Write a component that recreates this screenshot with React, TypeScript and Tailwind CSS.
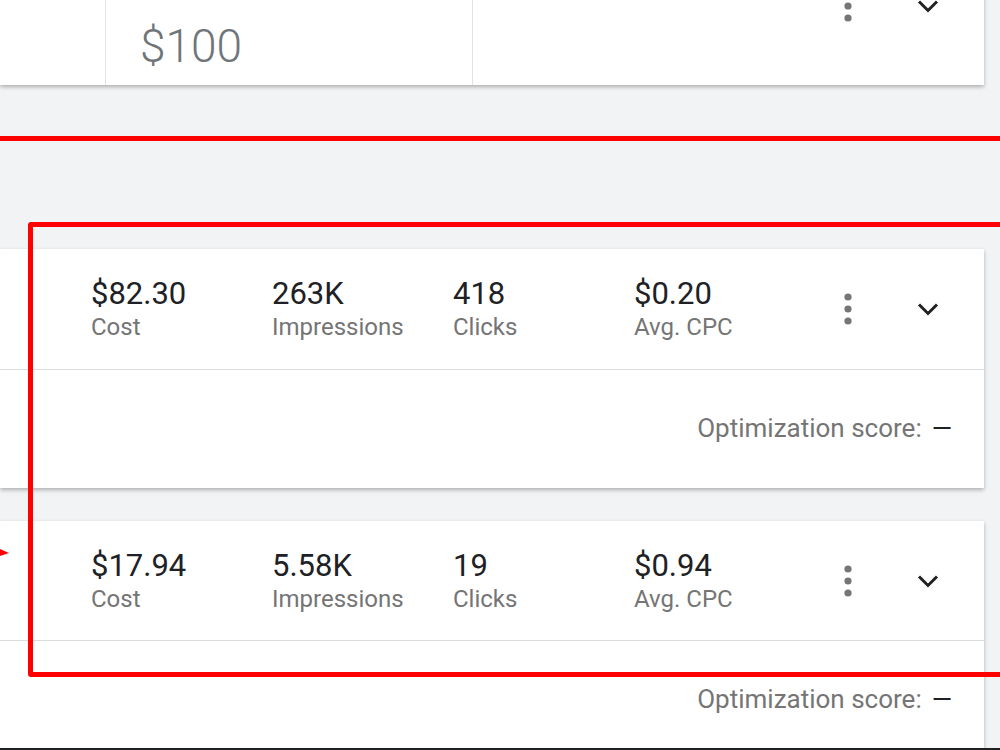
import React from "react";

function Actions() {
  return (
    <div className="flex items-center gap-[65px]">
      <svg width="8" height="32" viewBox="0 0 8 32" className="block">
        <circle cx="4" cy="4" r="3.6" fill="#757575" />
        <circle cx="4" cy="16" r="3.6" fill="#757575" />
        <circle cx="4" cy="28" r="3.6" fill="#757575" />
      </svg>
      <svg width="22" height="14" viewBox="0 0 22 14" className="block">
        <polyline points="2,2.5 11,11.5 20,2.5" fill="none" stroke="#202124" strokeWidth="3" />
      </svg>
    </div>
  );
}

function Stat({ value, label }: { value: string; label: string }) {
  return (
    <div className="w-[181px] shrink-0 flex flex-col">
      <span className="text-[31px] leading-[34px] text-[#202124]">{value}</span>
      <span className="mt-[2px] text-[24px] leading-[28px] text-[#757575]">{label}</span>
    </div>
  );
}

function StatCard({
  stats,
  headerH,
  className,
}: {
  stats: { value: string; label: string }[];
  headerH: string;
  className: string;
}) {
  return (
    <div className={"w-[984px] bg-white shadow-[0_2px_4px_rgba(0,0,0,0.28)] flex flex-col overflow-hidden " + className}>
      <div className={"flex items-center pl-[91px] border-b border-[#dadce0] shrink-0 " + headerH}>
        {stats.map((s) => (
          <Stat key={s.label} value={s.value} label={s.label} />
        ))}
        <div className="flex-1 flex justify-end pr-[45px]">
          <Actions />
        </div>
      </div>
      <div className="h-[117px] shrink-0 flex items-center justify-end pr-[32px]">
        <span className="text-[26px] text-[#757575]">Optimization score:</span>
        <span className="ml-[10px] text-[26px] text-[#202124]">—</span>
      </div>
    </div>
  );
}

export default function App() {
  return (
    <div className="relative w-[1000px] h-[750px] overflow-hidden bg-[#f1f3f4] font-['Roboto',sans-serif] flex flex-col">
      {/* top card */}
      <div className="-mt-[40px] h-[125px] w-[984px] shrink-0 bg-white shadow-[0_2px_4px_rgba(0,0,0,0.28)] flex">
        <div className="w-[106px] border-r border-[#e3e3e3]" />
        <div className="w-[367px] border-r border-[#e3e3e3] flex items-end pl-[34px] pb-[16px]">
          <span className="text-[46px] font-light leading-none text-[#70757a]">$100</span>
        </div>
        <div className="flex-1 flex justify-end items-start pt-[30px] pr-[45px]">
          <Actions />
        </div>
      </div>

      <StatCard
        className="mt-[164px] h-[239px] shrink-0"
        headerH="h-[121px]"
        stats={[
          { value: "$82.30", label: "Cost" },
          { value: "263K", label: "Impressions" },
          { value: "418", label: "Clicks" },
          { value: "$0.20", label: "Avg. CPC" },
        ]}
      />

      <StatCard
        className="mt-[33px] flex-1 min-h-0"
        headerH="h-[120px]"
        stats={[
          { value: "$17.94", label: "Cost" },
          { value: "5.58K", label: "Impressions" },
          { value: "19", label: "Clicks" },
          { value: "$0.94", label: "Avg. CPC" },
        ]}
      />

      <div className="h-[2px] shrink-0 bg-[#202124]" />

      {/* red annotations */}
      <div className="absolute left-0 top-[136px] w-full h-[5px] bg-[#ff0000]" />
      <div className="absolute left-[28px] top-[222px] w-[1000px] h-[455px] border-[5px] border-[#ff0000] rounded-[3px]" />
      <svg className="absolute left-0 top-[547px]" width="10" height="12" viewBox="0 0 10 12">
        <polygon points="0,2 9,6 0,9" fill="#ff0000" />
      </svg>
    </div>
  );
}
